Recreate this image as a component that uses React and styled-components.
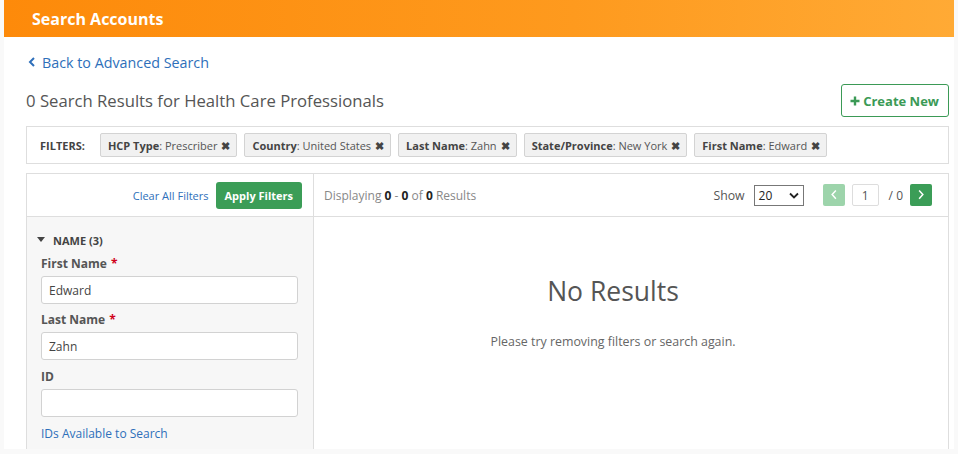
import React from "react";
import styled, { createGlobalStyle } from "styled-components";

const Global = createGlobalStyle`
  html, body { margin: 0; padding: 0; background: #f9f9f9; }
  body { font-family: "Open Sans", "Liberation Sans", sans-serif; color: #555; }
  * { box-sizing: border-box; }
`;

const Page = styled.div`
  margin: 0 4px;
  width: 950px;
  height: 449px;
  background: #fff;
  overflow: hidden;
  display: flex;
  flex-direction: column;
`;

const Header = styled.div`
  flex-shrink: 0;
  height: 37px;
  background: linear-gradient(90deg, #fd8a0a 0%, #fe9a1e 60%, #ffaa35 100%);
  display: flex;
  align-items: center;
  padding-left: 28px;
  color: #fff;
  font-weight: 700;
  font-size: 16px;
`;

const Content = styled.div`
  flex-shrink: 0;
  padding: 14px 5px 0 22px;
  display: flex;
  flex-direction: column;
`;

const BackLink = styled.a`
  display: flex;
  align-items: center;
  gap: 6px;
  color: #2e6fba;
  font-size: 14.3px;
  text-decoration: none;
  height: 22px;
  padding-left: 2px;
`;

const TitleRow = styled.div`
  display: flex;
  justify-content: space-between;
  align-items: center;
  margin-top: 11px;
  height: 33px;
`;

const Title = styled.h1`
  margin: 0;
  font-size: 16.7px;
  font-weight: 400;
  color: #555;
`;

const OutlineButton = styled.button`
  font-family: inherit;
  height: 33px;
  padding: 0 9px 0 8px;
  border: 1px solid #3b9a56;
  border-radius: 3px;
  background: #fff;
  color: #3b9a56;
  font-weight: 700;
  font-size: 13px;
  display: flex;
  align-items: center;
  gap: 3px;
`;

const FilterBar = styled.div`
  margin-top: 9px;
  height: 38px;
  border: 1px solid #dedede;
  display: flex;
  align-items: center;
  padding-left: 13px;
  gap: 7px;
`;

const FiltersLabel = styled.span`
  font-size: 11px;
  font-weight: 700;
  color: #444;
  margin-right: 8px;
`;

const Chip = styled.span`
  height: 24px;
  display: inline-flex;
  align-items: center;
  padding: 0 6px 0 7px;
  background: #f1f1f1;
  border: 1px solid #d3d3d3;
  border-radius: 2px;
  font-size: 11px;
  color: #555;
  white-space: nowrap;
  b { color: #444; font-weight: 700; }
`;

const ChipX = styled.span`
  margin-left: 4px;
  font-size: 11px;
  font-weight: 700;
  color: #444;
`;

const Panel = styled.div`
  margin-top: 9px;
  border: 1px solid #dedede;
  border-bottom: none;
  display: grid;
  grid-template-columns: 287px 1fr;
  height: 290px;
`;

const Sidebar = styled.div`
  border-right: 1px solid #dedede;
  display: flex;
  flex-direction: column;
  background: #f7f7f7;
`;

const Toolbar = styled.div`
  height: 43px;
  flex-shrink: 0;
  border-bottom: 1px solid #dedede;
  background: #fff;
  display: flex;
  align-items: center;
  padding: 0 ${(p) => p.$pr || 0}px 0 ${(p) => p.$pl || 0}px;
  justify-content: ${(p) => p.$justify || "flex-start"};
  gap: ${(p) => p.$gap || 0}px;
`;

const LinkText = styled.a`
  color: #2e6fba;
  font-size: ${(p) => p.$size || 11}px;
  text-decoration: none;
`;

const GreenButton = styled.button`
  font-family: inherit;
  height: 27px;
  padding: 0 9px;
  border: none;
  border-radius: 3px;
  background: #3b9d57;
  color: #fff;
  font-weight: 700;
  font-size: 11px;
`;

const Section = styled.div`
  padding: 14px 15px 0 10px;
  display: flex;
  flex-direction: column;
`;

const SectionTitle = styled.div`
  display: flex;
  align-items: center;
  gap: 8px;
  font-size: 11px;
  font-weight: 700;
  color: #444;
  height: 18px;
`;

const Field = styled.div`
  padding-left: 4px;
  display: flex;
  flex-direction: column;
  margin-top: ${(p) => p.$mt || 0}px;
`;

const Label = styled.label`
  font-size: 12px;
  font-weight: 700;
  color: #555;
  height: 20px;
  display: flex;
  align-items: center;
  margin-bottom: 3px;
  span { color: #d0021b; margin-left: 4px; }
`;

const Input = styled.div`
  height: 28px;
  background: #fff;
  border: 1px solid #d2d2d2;
  border-radius: 3px;
  display: flex;
  align-items: center;
  padding-left: 7px;
  font-size: 12px;
  color: #444;
`;

const Main = styled.div`
  display: flex;
  flex-direction: column;
`;

const Displaying = styled.span`
  font-size: 12px;
  color: #888;
  b { color: #222; }
`;

const Spacer = styled.div`
  flex: 1;
`;

const ShowLabel = styled.span`
  font-size: 12.3px;
  color: #555;
  margin-right: 9px;
`;

const Select = styled.div`
  width: 50px;
  height: 21px;
  border: 1px solid #777;
  display: flex;
  align-items: center;
  justify-content: space-between;
  padding: 0 4px 0 4px;
  font-size: 12px;
  color: #222;
  margin-right: 19px;
`;

const PageBtn = styled.div`
  width: 22px;
  height: 22px;
  border-radius: 2px;
  background: ${(p) => (p.$disabled ? "#9dd4ab" : "#3b9d57")};
  display: flex;
  align-items: center;
  justify-content: center;
`;

const PageInput = styled.div`
  width: 27px;
  height: 22px;
  border: 1px solid #ddd;
  border-radius: 2px;
  margin: 0 10px 0 7px;
  display: flex;
  align-items: center;
  justify-content: center;
  font-size: 12px;
  color: #555;
`;

const PageTotal = styled.span`
  font-size: 12px;
  color: #555;
  margin-right: 7px;
`;

const Empty = styled.div`
  flex: 1;
  display: flex;
  flex-direction: column;
  align-items: center;
  padding: 56px 36px 0 0;
`;

const EmptyTitle = styled.div`
  font-size: 26.5px;
  color: #555;
  line-height: 36px;
`;

const EmptyText = styled.div`
  margin-top: 24px;
  font-size: 12.4px;
  color: #666;
`;

const Chevron = ({ dir = "left", color = "#fff", size = 8 }) => (
  <svg width={size} height={size * 1.4} viewBox="0 0 8 12">
    <path
      d={dir === "left" ? "M6 1.5 L2 6 L6 10.5" : "M2 1.5 L6 6 L2 10.5"}
      stroke={color}
      strokeWidth="1.6"
      fill="none"
    />
  </svg>
);

const filters = [
  ["HCP Type", "Prescriber"],
  ["Country", "United States"],
  ["Last Name", "Zahn"],
  ["State/Province", "New York"],
  ["First Name", "Edward"],
];

export default function App() {
  return (
    <>
      <Global />
      <Page>
        <Header>Search Accounts</Header>
        <Content>
          <BackLink href="#">
            <svg width="8" height="10" viewBox="0 0 8 10">
              <path d="M6 1 L2 5 L6 9" stroke="#2e6fba" strokeWidth="2" fill="none" />
            </svg>
            Back to Advanced Search
          </BackLink>
          <TitleRow>
            <Title>0 Search Results for Health Care Professionals</Title>
            <OutlineButton>
              <svg width="10" height="10" viewBox="0 0 10 10">
                <path d="M5 0.5 V9.5 M0.5 5 H9.5" stroke="#3b9a56" strokeWidth="2.4" />
              </svg>
              Create New
            </OutlineButton>
          </TitleRow>
          <FilterBar>
            <FiltersLabel>FILTERS:</FiltersLabel>
            {filters.map(([k, v]) => (
              <Chip key={k}>
                <b>{k}</b>: {v}
                <ChipX>✖</ChipX>
              </Chip>
            ))}
          </FilterBar>
          <Panel>
            <Sidebar>
              <Toolbar $justify="flex-end" $pr={11} $gap={7}>
                <LinkText href="#">Clear All Filters</LinkText>
                <GreenButton>Apply Filters</GreenButton>
              </Toolbar>
              <Section>
                <SectionTitle>
                  <svg width="8" height="6" viewBox="0 0 8 6">
                    <path d="M0 0 H8 L4 5 Z" fill="#444" />
                  </svg>
                  NAME (3)
                </SectionTitle>
                <Field $mt={4}>
                  <Label>
                    First Name<span>*</span>
                  </Label>
                  <Input>Edward</Input>
                </Field>
                <Field $mt={5}>
                  <Label>
                    Last Name<span>*</span>
                  </Label>
                  <Input>Zahn</Input>
                </Field>
                <Field $mt={6}>
                  <Label>ID</Label>
                  <Input />
                </Field>
                <Field $mt={8}>
                  <LinkText href="#" $size={12}>IDs Available to Search</LinkText>
                </Field>
              </Section>
            </Sidebar>
            <Main>
              <Toolbar $pl={10} $pr={16}>
                <Displaying>
                  Displaying <b>0</b> - <b>0</b> of <b>0</b> Results
                </Displaying>
                <Spacer />
                <ShowLabel>Show</ShowLabel>
                <Select>
                  20
                  <svg width="10" height="7" viewBox="0 0 10 7">
                    <path d="M1 1.5 L5 5.5 L9 1.5" stroke="#222" strokeWidth="1.8" fill="none" />
                  </svg>
                </Select>
                <PageBtn $disabled>
                  <Chevron dir="left" />
                </PageBtn>
                <PageInput>1</PageInput>
                <PageTotal>/ 0</PageTotal>
                <PageBtn>
                  <Chevron dir="right" />
                </PageBtn>
              </Toolbar>
              <Empty>
                <EmptyTitle>No Results</EmptyTitle>
                <EmptyText>Please try removing filters or search again.</EmptyText>
              </Empty>
            </Main>
          </Panel>
        </Content>
      </Page>
    </>
  );
}
